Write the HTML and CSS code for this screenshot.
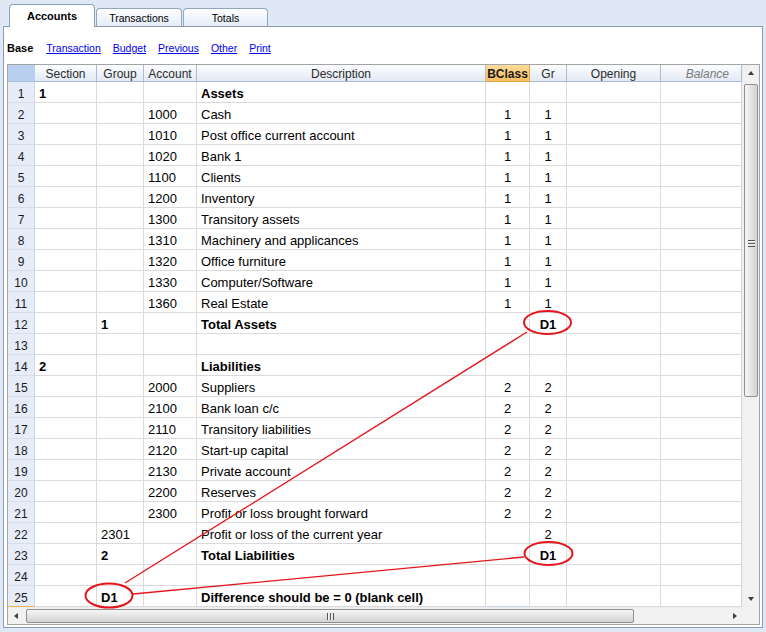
FILE: index.html
```html
<!DOCTYPE html>
<html>
<head>
<meta charset="utf-8">
<link rel="stylesheet" href="styles.css">
</head>
<body>
<div class="tabs">
  <div class="tab active">Accounts</div>
  <div class="tab">Transactions</div>
  <div class="tab last">Totals</div>
</div>
<div class="panel">
  <div class="links">
    <b class="base">Base</b>
    <a>Transaction</a>
    <a>Budget</a>
    <a>Previous</a>
    <a>Other</a>
    <a>Print</a>
  </div>
  <div class="grid">
    <div class="main">
      <div class="table">
        <div class="row head">
          <div class="c rn"></div>
          <div class="c">Section</div>
          <div class="c">Group</div>
          <div class="c">Account</div>
          <div class="c">Description</div>
          <div class="c cur">BClass</div>
          <div class="c">Gr</div>
          <div class="c">Opening</div>
          <div class="c bal">Balance</div>
        </div>
        <div class="row"><div class="c rn">1</div><div class="c b">1</div><div class="c"></div><div class="c"></div><div class="c b">Assets</div><div class="c n"></div><div class="c n"></div><div class="c"></div><div class="c"></div></div>
        <div class="row"><div class="c rn">2</div><div class="c"></div><div class="c"></div><div class="c">1000</div><div class="c">Cash</div><div class="c n">1</div><div class="c n">1</div><div class="c"></div><div class="c"></div></div>
        <div class="row"><div class="c rn">3</div><div class="c"></div><div class="c"></div><div class="c">1010</div><div class="c">Post office current account</div><div class="c n">1</div><div class="c n">1</div><div class="c"></div><div class="c"></div></div>
        <div class="row"><div class="c rn">4</div><div class="c"></div><div class="c"></div><div class="c">1020</div><div class="c">Bank 1</div><div class="c n">1</div><div class="c n">1</div><div class="c"></div><div class="c"></div></div>
        <div class="row"><div class="c rn">5</div><div class="c"></div><div class="c"></div><div class="c">1100</div><div class="c">Clients</div><div class="c n">1</div><div class="c n">1</div><div class="c"></div><div class="c"></div></div>
        <div class="row"><div class="c rn">6</div><div class="c"></div><div class="c"></div><div class="c">1200</div><div class="c">Inventory</div><div class="c n">1</div><div class="c n">1</div><div class="c"></div><div class="c"></div></div>
        <div class="row"><div class="c rn">7</div><div class="c"></div><div class="c"></div><div class="c">1300</div><div class="c">Transitory assets</div><div class="c n">1</div><div class="c n">1</div><div class="c"></div><div class="c"></div></div>
        <div class="row"><div class="c rn">8</div><div class="c"></div><div class="c"></div><div class="c">1310</div><div class="c">Machinery and applicances</div><div class="c n">1</div><div class="c n">1</div><div class="c"></div><div class="c"></div></div>
        <div class="row"><div class="c rn">9</div><div class="c"></div><div class="c"></div><div class="c">1320</div><div class="c">Office furniture</div><div class="c n">1</div><div class="c n">1</div><div class="c"></div><div class="c"></div></div>
        <div class="row"><div class="c rn">10</div><div class="c"></div><div class="c"></div><div class="c">1330</div><div class="c">Computer/Software</div><div class="c n">1</div><div class="c n">1</div><div class="c"></div><div class="c"></div></div>
        <div class="row"><div class="c rn">11</div><div class="c"></div><div class="c"></div><div class="c">1360</div><div class="c">Real Estate</div><div class="c n">1</div><div class="c n">1</div><div class="c"></div><div class="c"></div></div>
        <div class="row"><div class="c rn">12</div><div class="c"></div><div class="c b">1</div><div class="c"></div><div class="c b">Total Assets</div><div class="c n"></div><div class="c n b">D1</div><div class="c"></div><div class="c"></div></div>
        <div class="row"><div class="c rn">13</div><div class="c"></div><div class="c"></div><div class="c"></div><div class="c"></div><div class="c n"></div><div class="c n"></div><div class="c"></div><div class="c"></div></div>
        <div class="row"><div class="c rn">14</div><div class="c b">2</div><div class="c"></div><div class="c"></div><div class="c b">Liabilities</div><div class="c n"></div><div class="c n"></div><div class="c"></div><div class="c"></div></div>
        <div class="row"><div class="c rn">15</div><div class="c"></div><div class="c"></div><div class="c">2000</div><div class="c">Suppliers</div><div class="c n">2</div><div class="c n">2</div><div class="c"></div><div class="c"></div></div>
        <div class="row"><div class="c rn">16</div><div class="c"></div><div class="c"></div><div class="c">2100</div><div class="c">Bank loan c/c</div><div class="c n">2</div><div class="c n">2</div><div class="c"></div><div class="c"></div></div>
        <div class="row"><div class="c rn">17</div><div class="c"></div><div class="c"></div><div class="c">2110</div><div class="c">Transitory liabilities</div><div class="c n">2</div><div class="c n">2</div><div class="c"></div><div class="c"></div></div>
        <div class="row"><div class="c rn">18</div><div class="c"></div><div class="c"></div><div class="c">2120</div><div class="c">Start-up capital</div><div class="c n">2</div><div class="c n">2</div><div class="c"></div><div class="c"></div></div>
        <div class="row"><div class="c rn">19</div><div class="c"></div><div class="c"></div><div class="c">2130</div><div class="c">Private account</div><div class="c n">2</div><div class="c n">2</div><div class="c"></div><div class="c"></div></div>
        <div class="row"><div class="c rn">20</div><div class="c"></div><div class="c"></div><div class="c">2200</div><div class="c">Reserves</div><div class="c n">2</div><div class="c n">2</div><div class="c"></div><div class="c"></div></div>
        <div class="row"><div class="c rn">21</div><div class="c"></div><div class="c"></div><div class="c">2300</div><div class="c">Profit or loss brought forward</div><div class="c n">2</div><div class="c n">2</div><div class="c"></div><div class="c"></div></div>
        <div class="row"><div class="c rn">22</div><div class="c"></div><div class="c">2301</div><div class="c"></div><div class="c">Profit or loss of the current year</div><div class="c n"></div><div class="c n">2</div><div class="c"></div><div class="c"></div></div>
        <div class="row"><div class="c rn">23</div><div class="c"></div><div class="c b">2</div><div class="c"></div><div class="c b">Total Liabilities</div><div class="c n"></div><div class="c n b">D1</div><div class="c"></div><div class="c"></div></div>
        <div class="row"><div class="c rn">24</div><div class="c"></div><div class="c"></div><div class="c"></div><div class="c"></div><div class="c n"></div><div class="c n"></div><div class="c"></div><div class="c"></div></div>
        <div class="row lastrow"><div class="c rn currow">25</div><div class="c"></div><div class="c b">D1</div><div class="c"></div><div class="c b">Difference should be = 0 (blank cell)</div><div class="c n curcell"></div><div class="c n"></div><div class="c"></div><div class="c"></div></div>
      </div>
      <div class="vscroll">
        <div class="arrow up"></div>
        <div class="vthumb"><div class="vgrip"></div></div>
        <div class="vspace"></div>
        <div class="arrow down"></div>
      </div>
    </div>
    <div class="hbar">
      <div class="hscroll">
        <div class="harrow left"></div>
        <div class="hthumb"><div class="hgrip"></div></div>
        <div class="hspace"></div>
        <div class="harrow right"></div>
      </div>
      <div class="corner"></div>
    </div>
  </div>
</div>
<svg class="overlay" width="766" height="632" viewBox="0 0 766 632">
  <g fill="none" stroke="#e5141c">
    <line x1="125" y1="583" x2="527" y2="332" stroke-width="1.3"/>
    <line x1="133" y1="594" x2="524" y2="557" stroke-width="1.3"/>
    <ellipse cx="547.5" cy="322.5" rx="23.5" ry="11.5" stroke-width="2"/>
    <ellipse cx="548.5" cy="553.5" rx="24" ry="11.5" stroke-width="2"/>
    <ellipse cx="109" cy="595.5" rx="23.5" ry="12" stroke-width="2"/>
  </g>
</svg>
</body>
</html>
```
FILE: styles.css
```css
html, body {
  margin: 0;
  padding: 0;
}
body {
  position: relative;
  width: 766px;
  height: 632px;
  overflow: hidden;
  background: #dfe9f5;
  font-family: "Liberation Sans", Arial, sans-serif;
  color: #000;
}

/* Tabs */
.tabs {
  display: flex;
  align-items: flex-end;
  height: 26px;
  padding-left: 9px;
  box-sizing: border-box;
}
.tab {
  box-sizing: border-box;
  width: 86px;
  height: 18px;
  margin-right: 1px;
  border: 1px solid #93a6c0;
  border-bottom: none;
  border-radius: 4px 4px 0 0;
  background: linear-gradient(#ffffff, #e4ecf8);
  font-size: 10.5px;
  line-height: 18px;
  text-align: center;
  color: #000;
}
.tab.last { width: 85px; }
.tab.active {
  position: relative;
  z-index: 1;
  height: 23px;
  margin-bottom: -1px;
  background: #ffffff;
  font-weight: bold;
  font-size: 11px;
  line-height: 22px;
  border-color: #8ea1bb;
}

/* Panel */
.panel {
  box-sizing: border-box;
  margin-left: 3px;
  width: 760px;
  height: 602px;
  border: 1px solid #8d9cb2;
  background: #ffffff;
}
.links {
  display: flex;
  align-items: center;
  height: 32px;
  padding-top: 5px;
  padding-left: 3px;
  gap: 12px;
  font-size: 10.5px;
}
.links .base {
  font-size: 11px;
  margin-right: 1px;
}
.links a {
  color: #0000ee;
  text-decoration: underline;
}

/* Grid */
.grid {
  box-sizing: border-box;
  margin-left: 3px;
  width: 753px;
  height: 561px;
  border: 1px solid #a3a3a3;
  display: flex;
  flex-direction: column;
}
.main {
  display: flex;
  height: 542px;
}
.table {
  width: 734px;
}
.row {
  display: grid;
  grid-template-columns: 27px 62px 47px 53px 289px 44px 37px 94px 81px;
  height: 21px;
}
.c {
  box-sizing: border-box;
  height: 21px;
  border-right: 1px solid #dadada;
  border-bottom: 1px solid #dadada;
  font-size: 13px;
  line-height: 24px;
  padding-left: 4px;
  white-space: nowrap;
  overflow: hidden;
  color: #000;
}
.c.b { font-weight: bold; }
.c.n {
  text-align: center;
  padding-left: 0;
}
.c.rn {
  background: #e6edf8;
  border-right: 1px solid #cdd8e8;
  border-bottom: 1px solid #d5dee9;
  text-align: center;
  padding-left: 0;
  font-size: 12px;
  color: #1a1a1a;
}
.c.rn.currow {
  border-bottom: 1px solid #f1b24c;
}
.c.curcell {
  border-bottom: 1px solid #c7d6ee;
}
.row.head {
  height: 17px;
}
.row.head .c {
  height: 17px;
  line-height: 18px;
  font-size: 12px;
  text-align: center;
  padding-left: 0;
  color: #2a2a2a;
  background: linear-gradient(#fcfdfe, #e2e9f4);
  border-right: 1px solid #a9bdd6;
  border-bottom: 1px solid #a9bdd6;
}
.row.head .c.rn {
  background: #b9cfef;
  border-right: 1px solid #b9cfef;
}
.row.head .c.cur {
  background: linear-gradient(#fcdb9a, #f6bf62);
  border-right: 1px solid #e6a53f;
  border-bottom: 1px solid #e6a53f;
  font-weight: bold;
  color: #1a1a1a;
}
.row.head .c.bal {
  font-style: italic;
  color: #7a7a7a;
  text-align: right;
  padding-right: 12px;
}

/* Vertical scrollbar */
.vscroll {
  width: 17px;
  height: 542px;
  background: #f1f1f1;
  display: flex;
  flex-direction: column;
  align-items: center;
  box-sizing: border-box;
  border-left: 1px solid #ececec;
}
.arrow {
  width: 16px;
  height: 17px;
  position: relative;
  flex: none;
}
.arrow::after {
  content: "";
  position: absolute;
  left: 5px;
  width: 0;
  height: 0;
  border-left: 3.5px solid transparent;
  border-right: 3.5px solid transparent;
}
.arrow.up::after {
  top: 6px;
  border-bottom: 4px solid #3c3c3c;
}
.arrow.down::after {
  top: 7px;
  border-top: 4px solid #3c3c3c;
}
.vthumb {
  box-sizing: border-box;
  width: 14px;
  height: 313px;
  margin-top: 2px;
  border: 1px solid #8f8f8f;
  border-radius: 2px;
  background: linear-gradient(90deg, #f7f7f7, #e4e4e4 50%, #d3d3d3);
  display: flex;
  align-items: center;
  justify-content: center;
  flex: none;
}
.vgrip {
  width: 7px;
  height: 7px;
  background: repeating-linear-gradient(#555 0 1px, #f4f4f4 1px 2px, transparent 2px 3px);
  margin-top: 6px;
}
.vspace { flex: 1; }

/* Horizontal scrollbar */
.hbar {
  display: flex;
  height: 17px;
}
.hscroll {
  width: 734px;
  height: 17px;
  background: #f1f1f1;
  display: flex;
  align-items: center;
  box-sizing: border-box;
  border-top: 1px solid #ececec;
}
.harrow {
  width: 17px;
  height: 16px;
  position: relative;
  flex: none;
}
.harrow::after {
  content: "";
  position: absolute;
  top: 4.5px;
  width: 0;
  height: 0;
  border-top: 3.5px solid transparent;
  border-bottom: 3.5px solid transparent;
}
.harrow.left::after {
  left: 6px;
  border-right: 4px solid #3c3c3c;
}
.harrow.right::after {
  left: 8px;
  border-left: 4px solid #3c3c3c;
}
.hthumb {
  box-sizing: border-box;
  width: 608px;
  height: 14px;
  margin-left: 1px;
  border: 1px solid #8f8f8f;
  border-radius: 2px;
  background: linear-gradient(#f7f7f7, #e4e4e4 50%, #d3d3d3);
  display: flex;
  align-items: center;
  justify-content: center;
  flex: none;
}
.hgrip {
  width: 7px;
  height: 7px;
  background: repeating-linear-gradient(90deg, #555 0 1px, #f4f4f4 1px 2px, transparent 2px 3px);
}
.hspace { flex: 1; }
.corner {
  width: 17px;
  height: 17px;
  background: #f1f1f1;
}

/* Overlay annotations */
.overlay {
  position: absolute;
  left: 0;
  top: 0;
  pointer-events: none;
}
```
